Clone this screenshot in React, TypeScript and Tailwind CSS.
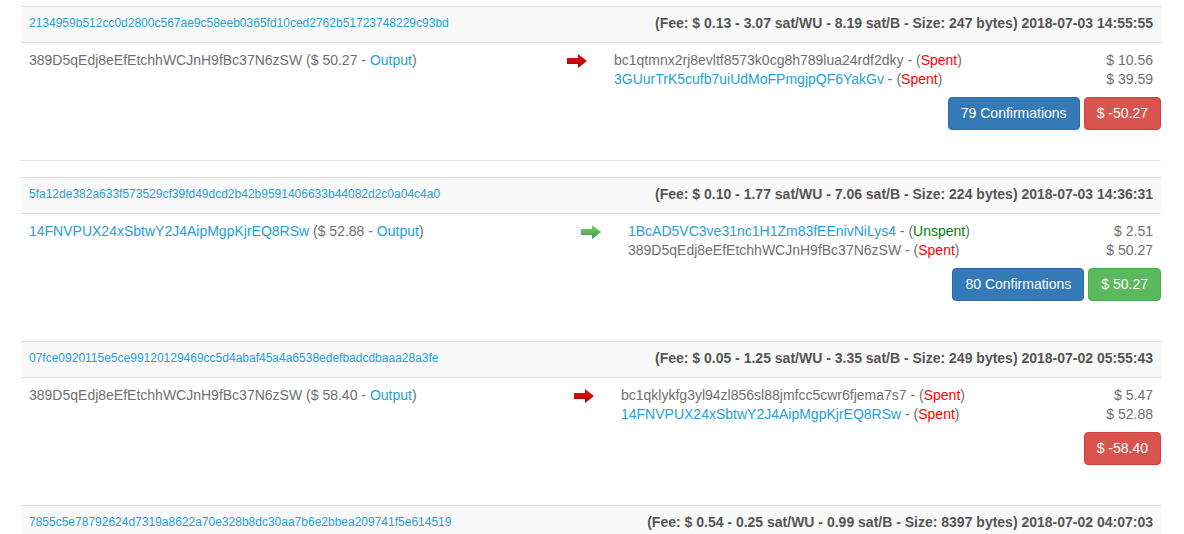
type Out = {
  addr: string;
  link?: boolean;
  spent: boolean;
  amount: string;
};

type Tx = {
  hash: string;
  fee: string;
  input: string;
  inputLink?: boolean;
  inputAmount: string;
  dir: "in" | "out";
  outs: Out[];
  outWidth: string;
  confirmations?: string;
  result?: string;
  bottom: string;
};

const txs: Tx[] = [
  {
    hash: "2134959b512cc0d2800c567ae9c58eeb0365fd10ced2762b51723748229c93bd",
    fee: "(Fee: $ 0.13 - 3.07 sat/WU - 8.19 sat/B - Size: 247 bytes) 2018-07-03 14:55:55",
    input: "389D5qEdj8eEfEtchhWCJnH9fBc37N6zSW",
    inputAmount: "$ 50.27",
    dir: "out",
    outs: [
      { addr: "bc1qtmnx2rj8evltf8573k0cg8h789lua24rdf2dky", spent: true, amount: "$ 10.56" },
      { addr: "3GUurTrK5cufb7uiUdMoFPmgjpQF6YakGv", link: true, spent: true, amount: "$ 39.59" },
    ],
    outWidth: "w-[539px]",
    confirmations: "79 Confirmations",
    result: "$ -50.27",
    bottom: "pb-[30px]",
  },
  {
    hash: "5fa12de382a633f573529cf39fd49dcd2b42b9591406633b44082d2c0a04c4a0",
    fee: "(Fee: $ 0.10 - 1.77 sat/WU - 7.06 sat/B - Size: 224 bytes) 2018-07-03 14:36:31",
    input: "14FNVPUX24xSbtwY2J4AipMgpKjrEQ8RSw",
    inputLink: true,
    inputAmount: "$ 52.88",
    dir: "in",
    outs: [
      { addr: "1BcAD5VC3ve31nc1H1Zm83fEEnivNiLys4", link: true, spent: false, amount: "$ 2.51" },
      { addr: "389D5qEdj8eEfEtchhWCJnH9fBc37N6zSW", spent: true, amount: "$ 50.27" },
    ],
    outWidth: "w-[525px]",
    confirmations: "80 Confirmations",
    result: "$ 50.27",
    bottom: "pb-[40px]",
  },
  {
    hash: "07fce0920115e5ce99120129469cc5d4abaf45a4a6538edefbadcdbaaa28a3fe",
    fee: "(Fee: $ 0.05 - 1.25 sat/WU - 3.35 sat/B - Size: 249 bytes) 2018-07-02 05:55:43",
    input: "389D5qEdj8eEfEtchhWCJnH9fBc37N6zSW",
    inputAmount: "$ 58.40",
    dir: "out",
    outs: [
      { addr: "bc1qklykfg3yl94zl856sl88jmfcc5cwr6fjema7s7", spent: true, amount: "$ 5.47" },
      { addr: "14FNVPUX24xSbtwY2J4AipMgpKjrEQ8RSw", link: true, spent: true, amount: "$ 52.88" },
    ],
    outWidth: "w-[532px]",
    result: "$ -58.40",
    bottom: "pb-[40px]",
  },
];

function Arrow({ dir }: { dir: "in" | "out" }) {
  const id = dir === "in" ? "ga" : "ra";
  return (
    <svg width="20" height="14" viewBox="0 0 20 14" className="mt-[3px]">
      <defs>
        <linearGradient id={id} x1="0" y1="0" x2="0" y2="1">
          {dir === "in" ? (
            <>
              <stop offset="0" stopColor="#7ccf72" />
              <stop offset="1" stopColor="#3f9a3a" />
            </>
          ) : (
            <>
              <stop offset="0" stopColor="#ee1111" />
              <stop offset="1" stopColor="#a80000" />
            </>
          )}
        </linearGradient>
      </defs>
      <polygon points="0,4 11,4 11,0 20,7 11,14 11,10 0,10" fill={`url(#${id})`} />
    </svg>
  );
}

function TxHeader({ hash, fee }: { hash: string; fee: string }) {
  return (
    <div className="flex h-[36px] items-center justify-between border-t border-[#ddd] bg-[#f9f9f9] px-2 pb-[4px]">
      <span className="text-[12px] text-[#25a0dc]">{hash}</span>
      <span className="text-[14px] font-bold text-[#555]">{fee}</span>
    </div>
  );
}

function TxBlock({ tx }: { tx: Tx }) {
  return (
    <div>
      <TxHeader hash={tx.hash} fee={tx.fee} />
      <div className={`border-t border-[#ddd] px-2 pt-[8px] ${tx.bottom}`}>
        <div className="flex items-start leading-[19px]">
          <div className="flex-1 text-[#6f6f6f]">
            <span className={tx.inputLink ? "text-[#25a0dc]" : ""}>{tx.input}</span> ({tx.inputAmount} -{" "}
            <span className="text-[#25a0dc]">Output</span>)
          </div>
          <div className="mr-[27px] w-[20px]">
            <Arrow dir={tx.dir} />
          </div>
          <div className={tx.outWidth}>
            {tx.outs.map((o) => (
              <div key={o.addr} className="flex justify-between text-[#6f6f6f]">
                <span>
                  <span className={o.link ? "text-[#25a0dc]" : ""}>{o.addr}</span> - (
                  {o.spent ? (
                    <span className="text-[#ff0000]">Spent</span>
                  ) : (
                    <span className="text-[#008000]">Unspent</span>
                  )}
                  )
                </span>
                <span>{o.amount}</span>
              </div>
            ))}
          </div>
        </div>
        <div className="-mr-2 mt-[8px] flex justify-end gap-1 leading-[19px]">
          {tx.confirmations && (
            <span className="rounded border border-[#2e6da4] bg-[#337ab7] px-3 py-[6px] text-white">
              {tx.confirmations}
            </span>
          )}
          {tx.result && (
            <span
              className={
                tx.dir === "in"
                  ? "rounded border border-[#4cae4c] bg-[#5cb85c] px-3 py-[6px] text-white"
                  : "rounded border border-[#d43f3a] bg-[#d9534f] px-3 py-[6px] text-white"
              }
            >
              {tx.result}
            </span>
          )}
        </div>
      </div>
    </div>
  );
}

export default function App() {
  return (
    <div className="min-h-screen bg-white pt-[6px] font-['Liberation_Sans',Arial,sans-serif] text-[14px] leading-5">
      <div className="ml-[21px] w-[1140px]">
        <TxBlock tx={txs[0]} />
        <hr className="mb-4 border-t border-[#e5e5e5]" />
        <TxBlock tx={txs[1]} />
        <TxBlock tx={txs[2]} />
        <TxHeader
          hash="7855c5e78792624d7319a8622a70e328b8dc30aa7b6e2bbea209741f5e614519"
          fee="(Fee: $ 0.54 - 0.25 sat/WU - 0.99 sat/B - Size: 8397 bytes) 2018-07-02 04:07:03"
        />
      </div>
    </div>
  );
}
